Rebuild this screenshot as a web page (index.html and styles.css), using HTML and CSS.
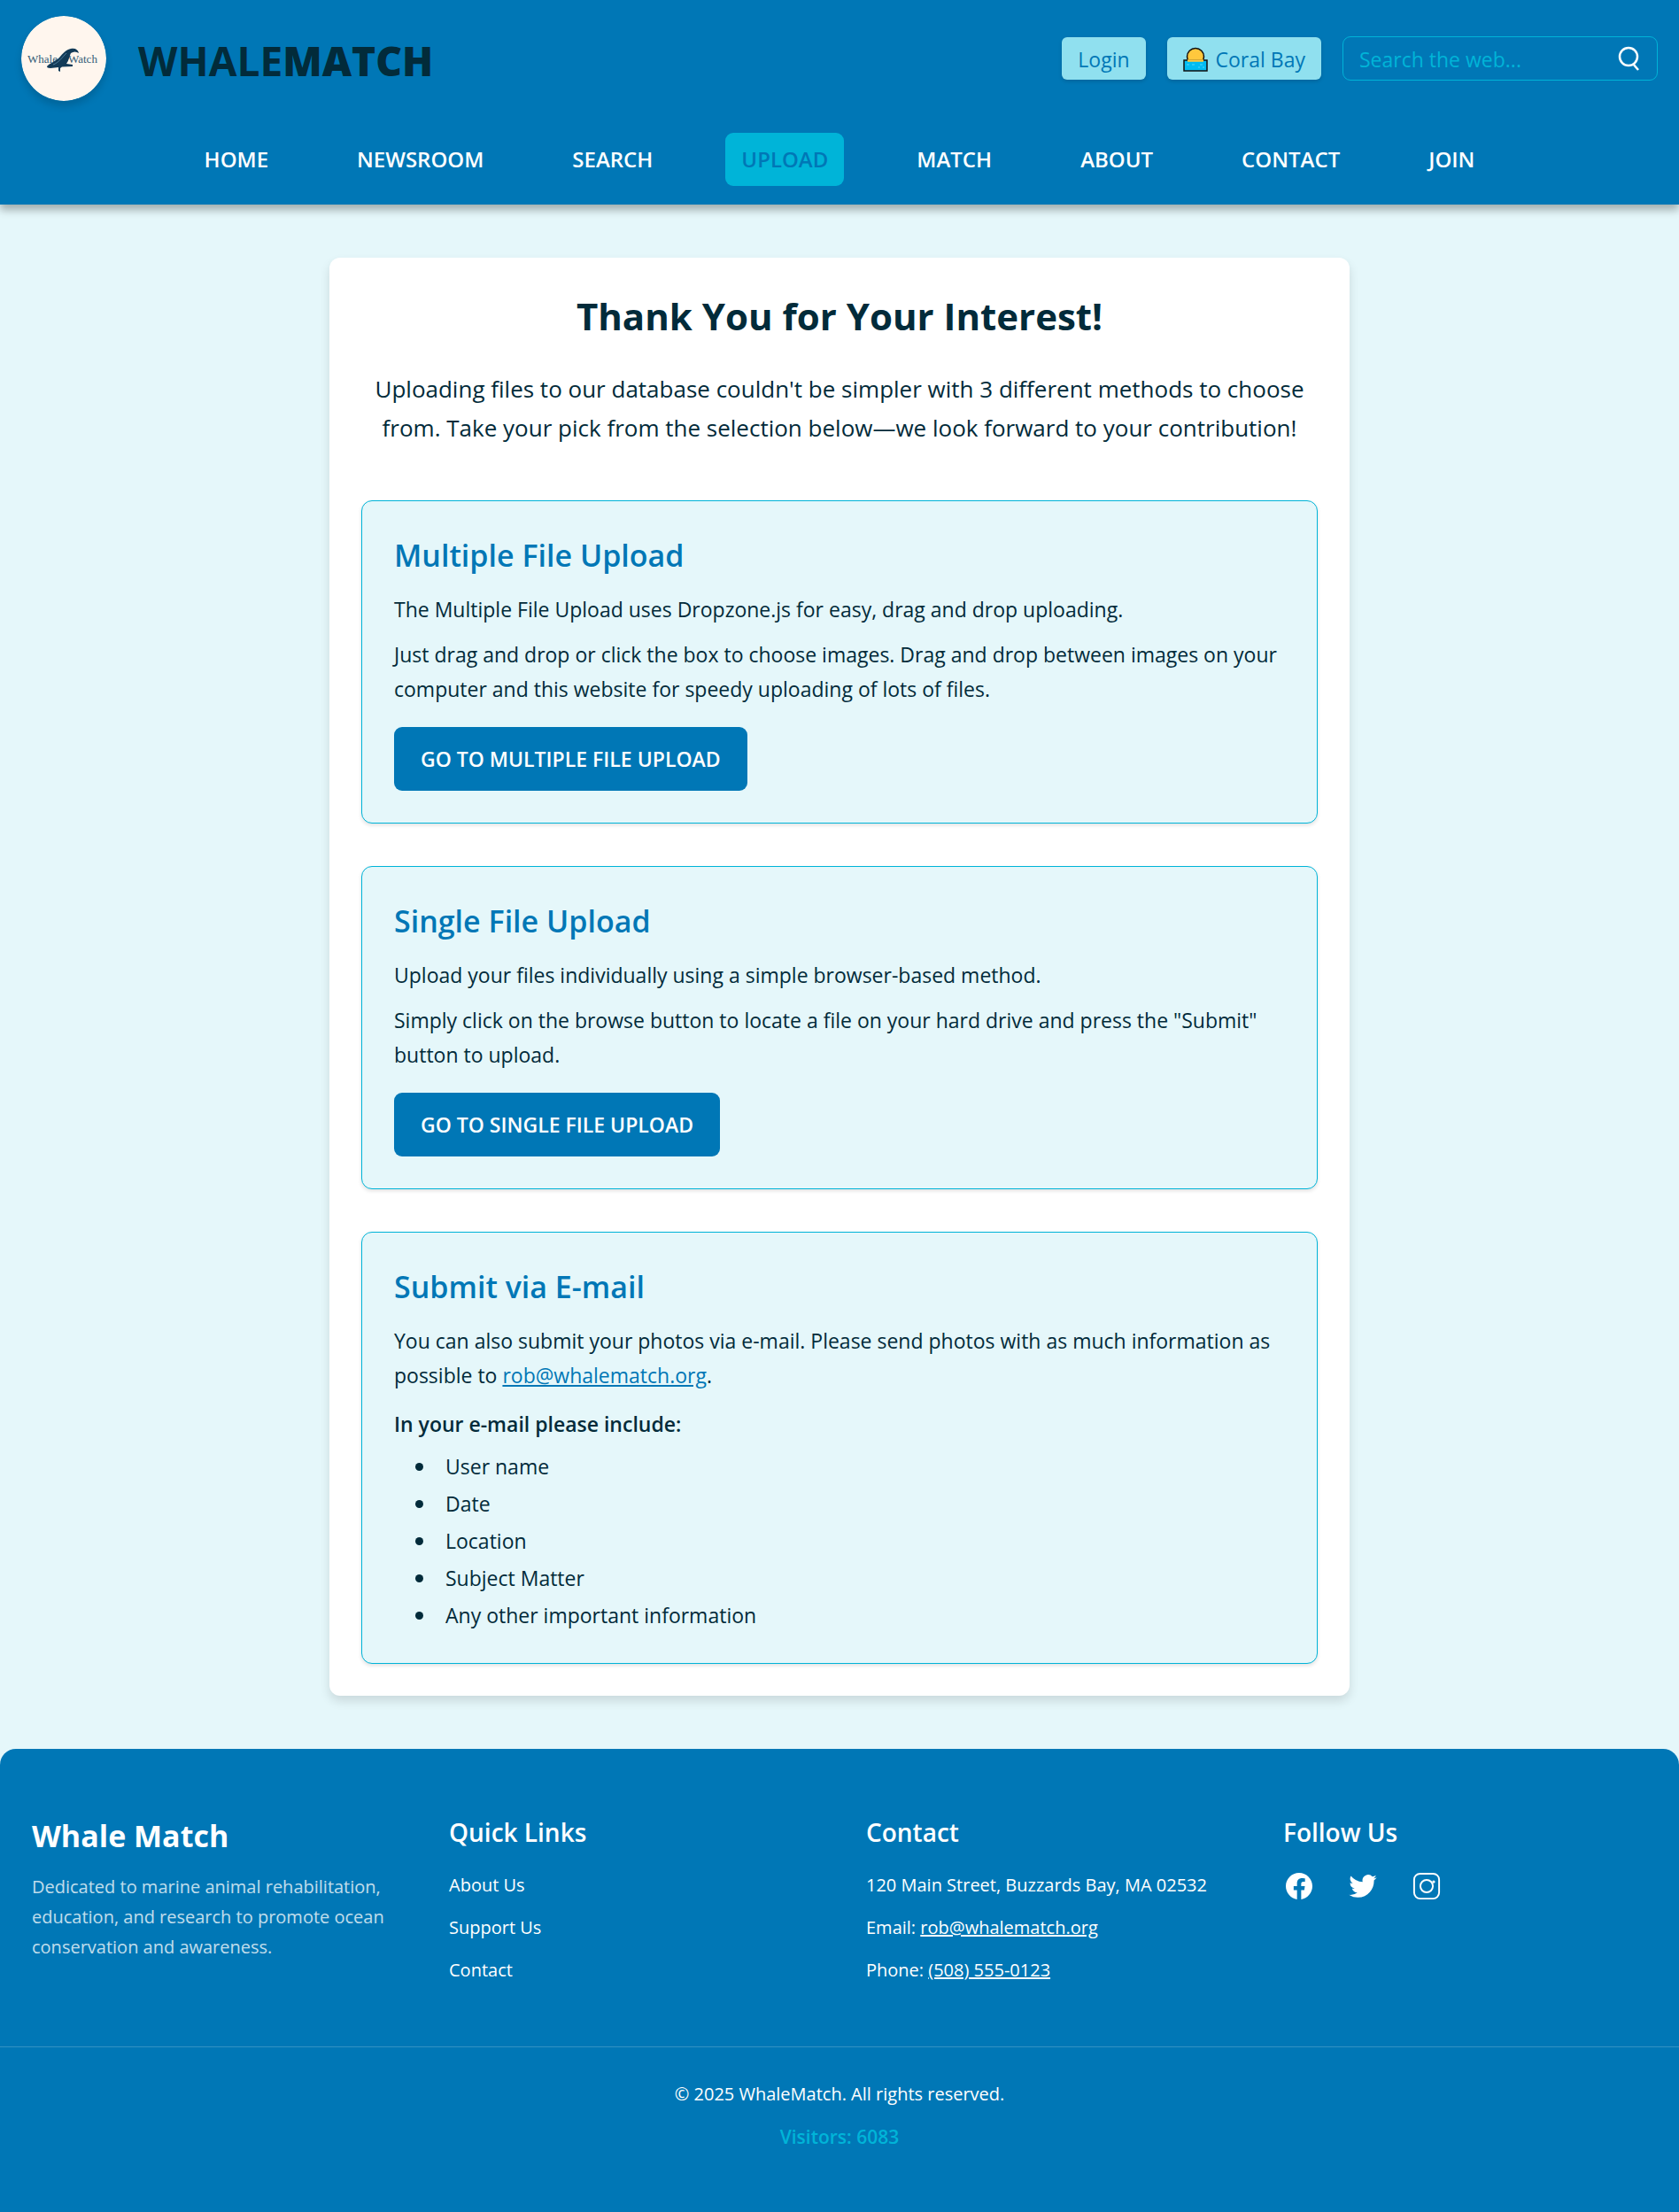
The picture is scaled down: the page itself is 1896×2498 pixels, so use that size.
FILE: index.html
```html
<!DOCTYPE html>
<html lang="en">
<head>
<meta charset="utf-8">
<meta name="viewport" content="width=device-width, initial-scale=1">
<title>Upload | WhaleMatch</title>
<link rel="stylesheet" href="styles.css">
</head>
<body>
<header class="site-header">
  <div class="topbar">
    <a class="brand" href="#">
      <svg class="brand-logo" viewBox="0 0 96 96" role="img" aria-label="Whale Watch">
        <circle cx="48" cy="48" r="48" fill="#fff6ee"/>
        <text class="logo-word" x="7" y="53">Whale</text>
        <text class="logo-word" x="53" y="53">Watch</text>
        <path d="M29 57C32 53 38 52 43 47C47 42 51 38 56 37C61 36 64 38 65 42C62 40 59 40 56 42C54 46 54 50 51 54L58 55L58 57L46 57.500L44 59L44 63L42 62L42 58L33 59C30 59 29 58 29 57Z" fill="#123a57"/>
        <path d="M36 55C42 53 46 47 51 42" fill="none" stroke="#4f7c9b" stroke-width="1"/>
      </svg>
      <span class="brand-name">WHALE<strong>MATCH</strong></span>
    </a>
    <div class="tools">
      <button class="chip" type="button">Login</button>
      <button class="chip" type="button">
        <svg class="chip-icon" viewBox="0 0 28 28" aria-hidden="true">
          <circle cx="14" cy="11" r="9.500" fill="#ffc83d" stroke="#111" stroke-width="1.500"/>
          <rect x="1" y="15" width="26" height="12" fill="#00bcf2" stroke="#111" stroke-width="1.500"/>
          <path d="M5 15.500H23" stroke="#ffc83d" stroke-width="2.500"/>
          <path d="M4 20H7M10 20H13M19 20H22M17 23H19M22 23H24" stroke="#50d8ff" stroke-width="1"/>
        </svg>
        Coral Bay
      </button>
      <form class="search" role="search">
        <input class="search-input" type="search" aria-label="Search the web" placeholder="Search the web...">
        <button class="search-button" type="button" aria-label="Search">
          <svg class="search-icon" viewBox="0 0 28 28" fill="none" stroke="#fff" stroke-width="2.500" aria-hidden="true"><circle cx="14" cy="12" r="10"/><path d="M19 20L25 27"/></svg>
        </button>
      </form>
    </div>
  </div>
  <nav class="nav" aria-label="Main">
    <a class="nav-link" href="#">HOME</a>
    <a class="nav-link" href="#">NEWSROOM</a>
    <a class="nav-link" href="#">SEARCH</a>
    <a class="nav-link nav-link-active" href="#" aria-current="page">UPLOAD</a>
    <a class="nav-link" href="#">MATCH</a>
    <a class="nav-link" href="#">ABOUT</a>
    <a class="nav-link" href="#">CONTACT</a>
    <a class="nav-link" href="#">JOIN</a>
  </nav>
</header>

<main class="card">
  <h1 class="card-title">Thank You for Your Interest!</h1>
  <p class="intro">Uploading files to our database couldn't be simpler with 3 different methods to choose from. Take your pick from the selection below—we look forward to your contribution!</p>

  <div class="methods">
    <section class="method">
      <h2 class="method-title">Multiple File Upload</h2>
      <p class="method-text">The Multiple File Upload uses Dropzone.js for easy, drag and drop uploading.</p>
      <p class="method-text">Just drag and drop or click the box to choose images. Drag and drop between images on your computer and this website for speedy uploading of lots of files.</p>
      <a class="method-button" href="#">GO TO MULTIPLE FILE UPLOAD</a>
    </section>

    <section class="method">
      <h2 class="method-title">Single File Upload</h2>
      <p class="method-text">Upload your files individually using a simple browser-based method.</p>
      <p class="method-text">Simply click on the browse button to locate a file on your hard drive and press the "Submit" button to upload.</p>
      <a class="method-button" href="#">GO TO SINGLE FILE UPLOAD</a>
    </section>

    <section class="method">
      <h2 class="method-title">Submit via E-mail</h2>
      <p class="method-text">You can also submit your photos via e-mail. Please send photos with as much information as possible to <a class="text-link" href="mailto:rob@whalematch.org">rob@whalematch.org</a>.</p>
      <h3 class="method-subtitle">In your e-mail please include:</h3>
      <ul class="method-list">
        <li>User name</li>
        <li>Date</li>
        <li>Location</li>
        <li>Subject Matter</li>
        <li>Any other important information</li>
      </ul>
    </section>
  </div>
</main>

<footer class="site-footer">
  <div class="footer-columns">
    <section>
      <h2 class="footer-brand">Whale Match</h2>
      <p class="footer-about">Dedicated to marine animal rehabilitation, education, and research to promote ocean conservation and awareness.</p>
    </section>
    <section>
      <h3 class="footer-title">Quick Links</h3>
      <ul class="footer-list">
        <li><a class="footer-link" href="#">About Us</a></li>
        <li><a class="footer-link" href="#">Support Us</a></li>
        <li><a class="footer-link" href="#">Contact</a></li>
      </ul>
    </section>
    <section>
      <h3 class="footer-title">Contact</h3>
      <ul class="footer-list">
        <li>120 Main Street, Buzzards Bay, MA 02532</li>
        <li>Email: <a class="text-link" href="mailto:rob@whalematch.org">rob@whalematch.org</a></li>
        <li>Phone: <a class="text-link" href="tel:5085550123">(508) 555-0123</a></li>
      </ul>
    </section>
    <section>
      <h3 class="footer-title">Follow Us</h3>
      <div class="social">
        <a class="social-link" href="#" aria-label="Facebook"><svg viewBox="0 0 24 24" fill="currentColor" aria-hidden="true"><path d="M22 12.060C22 6.500 17.520 2 12 2S2 6.500 2 12.060c0 5.020 3.660 9.180 8.440 9.940v-7.030H7.900v-2.910h2.540V9.850c0-2.520 1.490-3.910 3.780-3.910 1.090 0 2.240.2 2.240.2v2.470H15.200c-1.240 0-1.630.78-1.630 1.570v1.880h2.780l-.45 2.910h-2.330V22C18.340 21.240 22 17.080 22 12.060Z"/></svg></a>
        <a class="social-link" href="#" aria-label="Twitter"><svg viewBox="0 0 24 24" fill="currentColor" aria-hidden="true"><path d="M22.460 5.500c-.77.350-1.600.580-2.460.690a4.300 4.300 0 0 0 1.880-2.380c-.83.500-1.750.850-2.720 1.050a4.280 4.280 0 0 0-7.320 3.910A12.160 12.160 0 0 1 3 4.290a4.280 4.280 0 0 0 1.330 5.720 4.200 4.200 0 0 1-1.940-.53v.05a4.290 4.290 0 0 0 3.440 4.200 4.300 4.300 0 0 1-1.930.08 4.290 4.290 0 0 0 4 2.980A8.600 8.600 0 0 1 1.600 18.560a12.130 12.130 0 0 0 6.560 1.920c7.880 0 12.210-6.540 12.210-12.210l-.02-.56a8.600 8.600 0 0 0 2.110-2.210Z"/></svg></a>
        <a class="social-link" href="#" aria-label="Instagram"><svg viewBox="0 0 24 24" fill="none" stroke="currentColor" stroke-width="1.300" aria-hidden="true"><rect x="2.600" y="2.600" width="18.800" height="18.800" rx="4.500"/><circle cx="12" cy="12" r="4.700"/><circle cx="17.300" cy="8.700" r="1.100" fill="currentColor" stroke="none"/></svg></a>
      </div>
    </section>
  </div>
  <div class="footer-bottom">
    <p>© 2025 WhaleMatch. All rights reserved.</p>
    <p class="visitors">Visitors: 6083</p>
  </div>
</footer>
</body>
</html>
```
FILE: styles.css
```css
:root {
  --blue: #0077b6;
  --cyan: #00b4d8;
  --pale: #90e0ef;
  --mist: #e5f7fa;
  --ink: #022b3a;
}

*, *::before, *::after { box-sizing: border-box; }

body {
  margin: 0;
  background: var(--mist);
  color: var(--ink);
  font: 23px/39px "Open Sans", "Noto Sans", sans-serif;
}

h1, h2, h3, p, ul { margin: 0; }

button, input { font: inherit; }

.text-link { color: inherit; text-decoration: underline; }

/* Header */
.site-header {
  padding: 18px 24px 21px;
  background: var(--blue);
  box-shadow: 0 6px 9px rgba(0, 0, 0, 0.3);
}

.topbar {
  display: flex;
  align-items: center;
  justify-content: space-between;
}

.brand {
  display: flex;
  align-items: center;
  gap: 36px;
  color: var(--ink);
  text-decoration: none;
}

.brand-logo {
  width: 96px;
  height: 96px;
  border-radius: 50%;
  box-shadow: 0 6px 9px rgba(0, 0, 0, 0.15);
}

.logo-word { fill: #335c77; font: 13px "Liberation Serif", serif; }

.brand-name {
  padding-top: 3px;
  font-size: 46px;
  font-weight: 700;
  line-height: 60px;
}

.brand-name strong { font-weight: 800; }

.tools { display: flex; align-items: center; gap: 24px; }

.chip {
  display: flex;
  align-items: center;
  gap: 9px;
  height: 48px;
  padding: 2px 18px 0;
  border: 0;
  border-radius: 6px;
  background: var(--pale);
  color: var(--blue);
  box-shadow: 0 2px 4px rgba(0, 0, 0, 0.15);
}

.chip-icon { width: 28px; height: 28px; }

.search {
  display: flex;
  align-items: center;
  width: 356px;
  height: 50px;
  padding: 0 18px;
  border: 1px solid var(--cyan);
  border-radius: 9px;
}

.search-input {
  flex: 1;
  min-width: 0;
  padding: 2px 0 0;
  border: 0;
  outline: 0;
  background: transparent;
  color: #fff;
}

.search-input::placeholder { color: var(--cyan); opacity: 1; }

.search-button { display: flex; padding: 0; border: 0; background: none; }
.search-icon { width: 28px; height: 28px; }

.nav {
  display: flex;
  justify-content: center;
  gap: 64px;
  margin-top: 36px;
}

.nav-link {
  padding: 0 18px;
  border-radius: 9px;
  color: #fff;
  font-size: 24px;
  font-weight: 600;
  line-height: 60px;
  text-decoration: none;
}

.nav-link-active { background: var(--cyan); color: var(--blue); }

/* Main card */
.card {
  max-width: 1152px;
  margin: 60px auto;
  padding: 36px;
  border-radius: 12px;
  background: #fff;
  box-shadow: 0 6px 12px rgba(0, 0, 0, 0.12);
}

.card-title {
  font-size: 42px;
  font-weight: 700;
  line-height: 60px;
  text-align: center;
}

.intro {
  margin: 30px 0 60px;
  font-size: 26px;
  line-height: 44px;
  text-align: center;
}

.methods { display: grid; gap: 48px; }

.method {
  padding: 36px;
  border: 1px solid var(--cyan);
  border-radius: 12px;
  background: var(--mist);
  box-shadow: 0 2px 4px rgba(0, 0, 0, 0.12);
}

.method-title {
  margin-bottom: 16px;
  color: var(--blue);
  font-size: 34px;
  font-weight: 600;
  line-height: 51px;
}

.method-text + .method-text { margin-top: 12px; }
.method-text .text-link { color: var(--blue); }

.method-button {
  display: inline-block;
  margin-top: 23px;
  padding: 0 30px;
  border-radius: 9px;
  background: var(--blue);
  color: #fff;
  font-weight: 600;
  line-height: 72px;
  text-decoration: none;
  vertical-align: top;
}

.method-subtitle { margin: 16px 0 10px; font-size: 23px; font-weight: 600; }

.method-list {
  display: grid;
  gap: 6px;
  padding-left: 24px;
  line-height: 36px;
  list-style: none;
}

.method-list li { display: flex; align-items: center; gap: 25px; }

.method-list li::before {
  content: "";
  width: 9px;
  height: 9px;
  border-radius: 50%;
  background: var(--ink);
}

/* Footer */
.site-footer {
  padding-top: 72px;
  border-radius: 18px 18px 0 0;
  background: var(--blue);
  color: #fff;
  font-size: 20px;
  line-height: 34px;
}

.footer-columns {
  display: grid;
  grid-template-columns: repeat(4, 1fr);
  gap: 60px;
  padding: 0 36px 69px;
}

.footer-brand {
  margin-bottom: 15px;
  font-size: 34px;
  font-weight: 700;
  line-height: 52px;
}

.footer-about { opacity: 0.75; }

.footer-title {
  margin-bottom: 21px;
  font-size: 28px;
  font-weight: 600;
  line-height: 44px;
}

.footer-list {
  display: grid;
  gap: 14px;
  padding: 0;
  list-style: none;
}

.footer-link { color: inherit; text-decoration: none; }

.social { display: flex; gap: 36px; }
.social-link { width: 36px; height: 36px; color: #fff; }
.social-link svg { display: block; }

.footer-bottom {
  display: grid;
  gap: 14px;
  padding: 36px 36px 69px;
  border-top: 1px solid rgba(255, 255, 255, 0.2);
  text-align: center;
}

.visitors { color: var(--cyan); font-size: 21px; font-weight: 600; }
```
